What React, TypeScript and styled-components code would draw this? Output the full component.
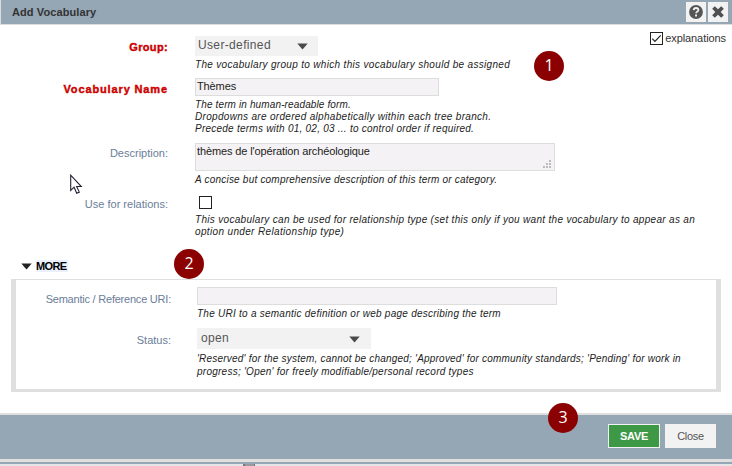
import React from "react";
import styled, { createGlobalStyle } from "styled-components";

const GlobalStyle = createGlobalStyle`
  * { box-sizing: border-box; }
  body { margin: 0; background: #fff; overflow: hidden; font-family: "Liberation Sans", Arial, sans-serif; font-size: 11px; color: #333; }
`;

const Dialog = styled.div`
  position: relative;
  width: 732px;
  height: 466px;
  display: flex;
  flex-direction: column;
  background: #fff;
`;

const Header = styled.header`
  height: 25px;
  flex: none;
  display: flex;
  align-items: center;
  gap: 2px;
  padding: 0 4px 0 11px;
  background: #95a6b5;
  border-left: 1px solid #ddd;
  border-bottom: 1px solid #ddd;
`;

const Title = styled.h1`
  margin: 0 auto 0 0;
  font-size: 11px;
  line-height: 24px;
  letter-spacing: 0.1px;
  color: #333;
`;

const IconButton = styled.button`
  width: 20px;
  height: 20px;
  padding: 0;
  border: 0;
  display: flex;
  align-items: center;
  justify-content: center;
  background: #f2f2f2;
`;

const Body = styled.main`
  position: relative;
  flex: 1;
  padding-top: 11px;
`;

const Row = styled.section<{ $height: number; $label?: number; $gap?: number }>`
  display: grid;
  grid-template-columns: ${(p) => p.$label ?? 168}px 1fr;
  column-gap: ${(p) => p.$gap ?? 27}px;
  height: ${(p) => p.$height}px;
`;

const Label = styled.label<{ $required?: boolean; $top?: number; $track?: number }>`
  justify-self: end;
  margin-top: ${(p) => p.$top ?? 3}px;
  height: 14px;
  line-height: 14px;
  white-space: nowrap;
  color: ${(p) => (p.$required ? "#c00" : "#6a7d99")};
  font-weight: ${(p) => (p.$required ? 700 : 400)};
  -webkit-text-stroke: ${(p) => (p.$required ? "0.4px #c00" : "0")};
  letter-spacing: ${(p) => p.$track ?? 0}px;
`;

const Select = styled.div<{ $width: number; $height: number; $pad: number; $inset: number }>`
  width: ${(p) => p.$width}px;
  height: ${(p) => p.$height}px;
  padding: 0 ${(p) => p.$inset}px 2px ${(p) => p.$pad}px;
  display: flex;
  align-items: center;
  justify-content: space-between;
  background: #f2f2f2;
  color: #555;
  font-size: 12px;
  letter-spacing: 0.35px;

  svg {
    margin-top: 3px;
  }
`;

const Box = styled.div<{ $width: number; $height?: number }>`
  width: ${(p) => p.$width}px;
  height: ${(p) => p.$height ?? 18}px;
  padding: 0 1px;
  display: flex;
  justify-content: space-between;
  border: 1px solid #ddd;
  background: #f4f2f4;
  line-height: 14px;
  letter-spacing: -0.12px;
  color: #222;
`;

const Grip = styled.svg`
  align-self: flex-end;
  margin: 0 2px 2px 0;
`;

const Hints = styled.div<{ $line?: number }>`
  margin-top: 3px;
  font-size: 10px;
  font-style: italic;
  line-height: ${(p) => p.$line ?? 12}px;
  color: #222;
`;

const Hint = styled.span<{ $track?: number }>`
  display: block;
  width: max-content;
  letter-spacing: ${(p) => p.$track ?? 0}px;
`;

const Check = styled.span`
  width: 13px;
  height: 13px;
  display: block;
  flex: none;
  border: 1px solid #222;
  background: #fff;
`;

const Tick = styled.svg`
  display: block;
`;

const RelationCheck = styled(Check)`
  margin: 0 0 5px 4px;
`;

const Explanations = styled.label`
  position: absolute;
  top: 7px;
  right: 6px;
  display: flex;
  align-items: center;
  gap: 2px;
  line-height: 13px;
  letter-spacing: -0.08px;
`;

const More = styled.div`
  display: flex;
  align-items: center;
  gap: 4px;
  height: 26px;
  padding-left: 21px;
  color: #000;
  font-weight: 700;
`;

const MoreText = styled.span`
  padding: 0 1px 0 0;
  line-height: 12px;
  background: #eaf1fb;
  letter-spacing: -0.6px;
`;

const Panel = styled.div`
  width: 710px;
  height: 113px;
  margin-left: 11px;
  padding-top: 7px;
  border: solid #dfdfdf;
  border-width: 1px 5px 3px;
`;

const Footer = styled.footer`
  height: 49px;
  flex: none;
  display: flex;
  justify-content: flex-end;
  gap: 5px;
  padding: 9px 16px 0 0;
  background: #95a6b5;
  border-top: 2px solid #dfdfdf;
  border-bottom: 3px solid #dfdfdf;
`;

const Button = styled.button<{ $primary?: boolean }>`
  width: ${(p) => (p.$primary ? 52 : 51)}px;
  height: 24px;
  padding: 0;
  border: 1px solid #f2f2f2;
  font: ${(p) => (p.$primary ? 700 : 400)} 11px "Liberation Sans", Arial, sans-serif;
  letter-spacing: -0.3px;
  color: ${(p) => (p.$primary ? "#fff" : "#555")};
  background: ${(p) => (p.$primary ? "#3d9946" : "#f2f2f2")};
`;

const Edge = styled.div`
  height: 4px;
  flex: none;
  padding-left: 243px;
  border-top: 2px solid #95a6b5;
  background: #e5e5e8;
`;

const Handle = styled.div`
  width: 12px;
  height: 2px;
  background: #9a98a2;
  border-left: 2px solid #777;
  border-right: 1px solid #777;
`;

const Badge = styled.div<{ $x: number; $y: number }>`
  position: absolute;
  left: ${(p) => p.$x}px;
  top: ${(p) => p.$y}px;
  width: 30px;
  height: 30px;
  border-radius: 50%;
  background: #8b0000;
  color: #fff;
  font: 16px/29px "Open Sans", sans-serif;
  text-align: center;
`;

const Pointer = styled.svg`
  position: absolute;
  left: 70px;
  top: 174px;
`;

const Arrow = ({ color = "#4a4a4a" }: { color?: string }) => (
  <svg width="11" height="7" viewBox="0 0 11 7">
    <path d="M0.3 0.5h10.4L5.5 6.5z" fill={color} />
  </svg>
);

export default function App() {
  return (
    <>
      <GlobalStyle />
      <Dialog>
        <Header>
          <Title>Add Vocabulary</Title>
          <IconButton aria-label="Help">
            <svg width="14" height="14" viewBox="0 0 14 14">
              <circle cx="7" cy="7" r="6.9" fill="#555" />
              <path d="M4.6 5.2C4.8 3.6 5.8 3 7 3c1.4 0 2.4.8 2.4 2 0 1.6-2.3 1.7-2.3 3.3" fill="none" stroke="#f2f2f2" strokeWidth="1.8" />
              <path d="M6.1 9.5h1.9v1.9H6.1z" fill="#f2f2f2" />
            </svg>
          </IconButton>
          <IconButton aria-label="Dismiss">
            <svg width="12" height="12" viewBox="0 0 12 12">
              <path d="M2.8 0.2L6 3.3 9.2 0.2 11.8 2.8 8.7 6 11.8 9.2 9.2 11.8 6 8.7 2.8 11.8 0.2 9.2 3.3 6 0.2 2.8z" fill="#505050" />
            </svg>
          </IconButton>
        </Header>
        <Body>
          <Explanations>
            <Check>
              <Tick width="11" height="11" viewBox="0 0 11 11">
                <path d="M1.3 5.7l2.6 2.6 5.8-6" fill="none" stroke="#222" strokeWidth="1.2" />
              </Tick>
            </Check>
            explanations
          </Explanations>
          <Row $height={42}>
            <Label $required $top={4} $track={0.35}>Group:</Label>
            <div>
              <Select $width={123} $height={20} $pad={3} $inset={10}>User-defined<Arrow /></Select>
              <Hints><Hint $track={0.32}>The vocabulary group to which this vocabulary should be assigned</Hint></Hints>
            </div>
          </Row>
          <Row $height={65}>
            <Label $required $top={4} $track={0.87}>Vocabulary Name</Label>
            <div>
              <Box $width={244}>Thèmes</Box>
              <Hints>
                <Hint $track={0.13}>The term in human-readable form.</Hint>
                <Hint $track={0.31}>Dropdowns are ordered alphabetically within each tree branch.</Hint>
                <Hint $track={0.24}>Precede terms with 01, 02, 03 ... to control order if required.</Hint>
              </Hints>
            </div>
          </Row>
          <Row $height={53}>
            <Label>Description:</Label>
            <div>
              <Box $width={360} $height={28}>
                thèmes de l'opération archéologique
                <Grip width="8" height="8" viewBox="0 0 8 8" fill="#bbb">
                  <path d="M6 0h2v2H6zM3 3h2v2H3zM6 3h2v2H6zM0 6h2v2H0zM3 6h2v2H3zM6 6h2v2H6z" />
                </Grip>
              </Box>
              <Hints><Hint $track={0.21}>A concise but comprehensive description of this term or category.</Hint></Hints>
            </div>
          </Row>
          <Row $height={57}>
            <Label $top={1}>Use for relations:</Label>
            <div>
              <RelationCheck />
              <Hints>
                <Hint $track={0.31}>This vocabulary can be used for relationship type (set this only if you want the vocabulary to appear as an</Hint>
                <Hint $track={0.35}>option under Relationship type)</Hint>
              </Hints>
            </div>
          </Row>
          <More><Arrow color="#222" /><MoreText>MORE</MoreText></More>
          <Panel>
            <Row $height={41} $label={155} $gap={26}>
              <Label $top={5} $track={-0.22}>Semantic / Reference URI:</Label>
              <div>
                <Box $width={360} />
                <Hints><Hint $track={0.25}>The URI to a semantic definition or web page describing the term</Hint></Hints>
              </div>
            </Row>
            <Row $height={52} $label={155} $gap={26}>
              <Label $top={5}>Status:</Label>
              <div>
                <Select $width={174} $height={21} $pad={4} $inset={11}>open<Arrow /></Select>
                <Hints $line={13}>
                  <Hint $track={0.21}>'Reserved' for the system, cannot be changed; 'Approved' for community standards; 'Pending' for work in</Hint>
                  <Hint $track={0.25}>progress; 'Open' for freely modifiable/personal record types</Hint>
                </Hints>
              </div>
            </Row>
          </Panel>
        </Body>
        <Footer>
          <Button $primary>SAVE</Button>
          <Button>Close</Button>
        </Footer>
        <Edge><Handle /></Edge>
        <Badge $x={534} $y={51}>1</Badge>
        <Badge $x={174} $y={249}>2</Badge>
        <Badge $x={548} $y={403}>3</Badge>
        <Pointer width="13" height="21" viewBox="0 0 13 21">
          <path d="M0.7 1.2v15.3l3.4-3.3 2.6 6 2.6-1.1-2.7-5.6h4.7z" fill="#fff" stroke="#223" strokeWidth="1.1" />
        </Pointer>
      </Dialog>
    </>
  );
}
